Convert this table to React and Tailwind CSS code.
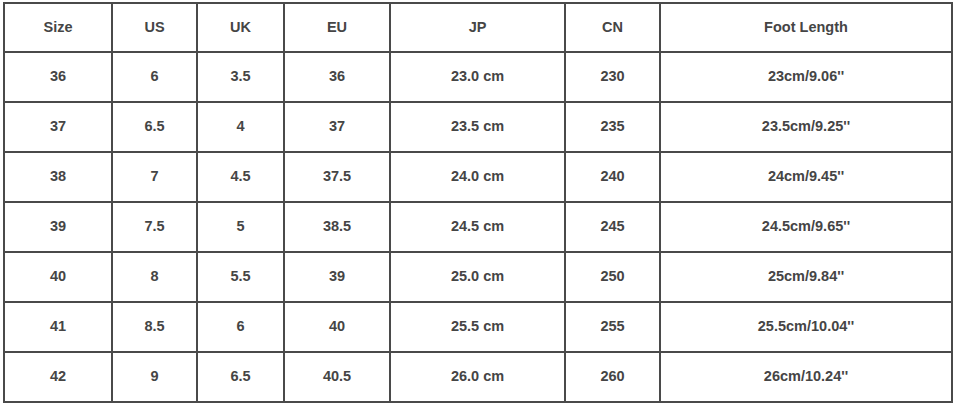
import React from "react";

const widths = [108, 85, 87, 106, 175, 95, 292];
const header = ["Size", "US", "UK", "EU", "JP", "CN", "Foot Length"];
const rows = [
  ["36", "6", "3.5", "36", "23.0 cm", "230", "23cm/9.06''"],
  ["37", "6.5", "4", "37", "23.5 cm", "235", "23.5cm/9.25''"],
  ["38", "7", "4.5", "37.5", "24.0 cm", "240", "24cm/9.45''"],
  ["39", "7.5", "5", "38.5", "24.5 cm", "245", "24.5cm/9.65''"],
  ["40", "8", "5.5", "39", "25.0 cm", "250", "25cm/9.84''"],
  ["41", "8.5", "6", "40", "25.5 cm", "255", "25.5cm/10.04''"],
  ["42", "9", "6.5", "40.5", "26.0 cm", "260", "26cm/10.24''"],
];

function Row({ cells, h }) {
  return (
    <div className="flex">
      {cells.map((c, i) => (
        <div
          key={i}
          style={{ width: widths[i], height: h }}
          className="flex items-center justify-center border-r-2 border-b-2 border-[#4a4a4a] shrink-0"
        >
          {c}
        </div>
      ))}
    </div>
  );
}

export default function App() {
  return (
    <div className="w-[956px] h-[407px] bg-white overflow-hidden">
      <div
        className="ml-[3px] mt-[2px] w-[950px] border-l-2 border-t-2 border-[#4a4a4a] text-[14.5px] font-bold text-[#454545]"
        style={{ fontFamily: '"Liberation Sans", Arial, sans-serif' }}
      >
        <Row cells={header} h={49} />
        {rows.map((r, i) => (
          <Row key={i} cells={r} h={50} />
        ))}
      </div>
    </div>
  );
}
